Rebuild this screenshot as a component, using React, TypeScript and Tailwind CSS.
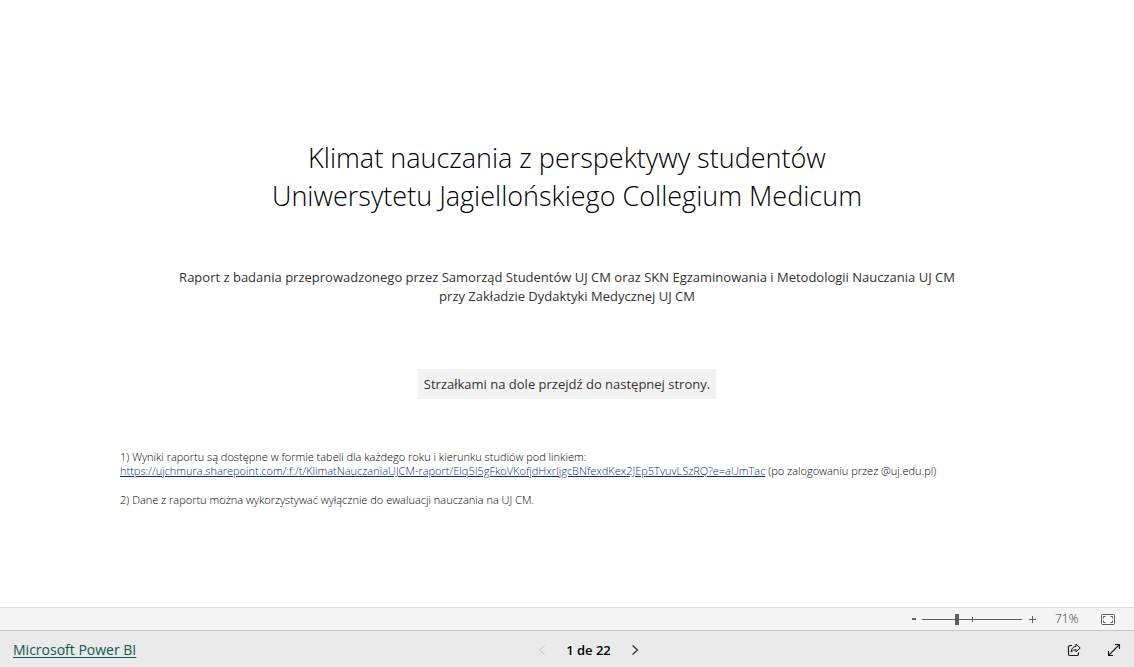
import { useState } from "react";

const REPORT_URL =
  "https://ujchmura.sharepoint.com/:f:/t/KlimatNauczaniaUJCM-raport/Elq5I5gFkoVKofjdHxrIjgcBNfexdKex2JEp5TvuvLSzRQ?e=aUmTac";

const TOTAL_PAGES = 22;

function ReportPage() {
  return (
    <main className="flex flex-1 flex-col items-center bg-white px-[120px] pt-[139px] text-[#323130]">
      <h1 className="text-center text-[27px] leading-[38px] font-light text-black">
        Klimat nauczania z perspektywy studentów
        <br />
        Uniwersytetu Jagiellońskiego Collegium Medicum
      </h1>

      <p className="mt-[53px] text-center text-[13px] leading-[19px]">
        Raport z badania przeprowadzonego przez Samorząd Studentów UJ CM oraz SKN Egzaminowania i Metodologii Nauczania UJ CM
        <br />
        przy Zakładzie Dydaktyki Medycznej UJ CM
      </p>

      <p className="mt-[63px] bg-[#f2f2f2] px-1.5 py-[5px] text-[13px] leading-5">
        Strzałkami na dole przejdź do następnej strony.
      </p>

      <div className="mt-[51px] self-stretch text-[11px] leading-[14px] font-light text-black">
        <p>1) Wyniki raportu są dostępne w formie tabeli dla każdego roku i kierunku studiów pod linkiem:</p>
        <p className="whitespace-nowrap">
          <a href={REPORT_URL} className="text-[#0f2a8a] underline">
            {REPORT_URL}
          </a>{" "}
          (po zalogowaniu przez @uj.edu.pl)
        </p>
        <p className="mt-[15px]">2) Dane z raportu można wykorzystywać wyłącznie do ewaluacji nauczania na UJ CM.</p>
      </div>
    </main>
  );
}

function ZoomBar() {
  const [zoom, setZoom] = useState(71);

  return (
    <div className="flex h-[23px] items-center justify-end border-t border-[#dcdcdc] bg-[#f4f4f4] pr-[19px] text-[#605e5c]">
      <button
        aria-label="Zoom out"
        onClick={() => setZoom(Math.max(10, zoom - 10))}
        className="flex h-4 w-4 items-center justify-center"
      >
        <span className="h-[2px] w-1 bg-current" />
      </button>
      <div className="relative flex items-center">
        <input
          type="range"
          aria-label="Zoom"
          min={10}
          max={190}
          value={zoom}
          onChange={(e) => setZoom(Number(e.target.value))}
          className="h-3 w-[100px] appearance-none bg-transparent [&::-webkit-slider-runnable-track]:h-px [&::-webkit-slider-runnable-track]:bg-[#605e5c] [&::-webkit-slider-thumb]:-mt-[5px] [&::-webkit-slider-thumb]:h-[11px] [&::-webkit-slider-thumb]:w-1 [&::-webkit-slider-thumb]:appearance-none [&::-webkit-slider-thumb]:bg-[#605e5c]"
        />
        <span className="pointer-events-none absolute left-1/2 h-[5px] w-px bg-[#605e5c]" />
      </div>
      <button
        aria-label="Zoom in"
        onClick={() => setZoom(Math.min(190, zoom + 10))}
        className="ml-[6px] flex h-4 w-[9px] items-center justify-center"
      >
        <svg width="9" height="9" viewBox="0 0 9 9" fill="none" stroke="currentColor">
          <path d="M1 4.5h7M4.5 1v7" />
        </svg>
      </button>
      <span className="ml-[18px] w-[26px] text-[12px] leading-4 font-light text-[#323130]">{zoom}%</span>
      <button aria-label="Fit to page" className="ml-5">
        <svg width="14" height="11" viewBox="0 0 14 11" fill="none" stroke="currentColor">
          <rect x="0.5" y="0.5" width="13" height="10" rx="1" />
          <path d="M2.5 4.5v-2h2M9.5 2.5h2v2M11.5 6.5v2h-2M4.5 8.5h-2v-2" />
        </svg>
      </button>
    </div>
  );
}

function StatusBar() {
  const [page, setPage] = useState(1);

  return (
    <footer className="grid h-[37px] grid-cols-3 items-center border-t border-[#c8c8c8] bg-[#eaeaea] px-[13px] pt-[2px]">
      <a
        href="https://powerbi.microsoft.com"
        className="justify-self-start text-[14px] leading-5 text-[#0b5a50] underline underline-offset-2"
      >
        Microsoft Power BI
      </a>

      <div className="flex items-center justify-self-center pl-[43px] text-black">
        <button
          aria-label="Previous page"
          disabled={page === 1}
          onClick={() => setPage(page - 1)}
          className="flex h-5 w-3 items-center justify-center disabled:text-[#bdbdbd]"
        >
          <svg width="8" height="12" viewBox="0 0 8 12" fill="none" stroke="currentColor">
            <path d="M6.5 1.5L1.5 6l5 4.5" />
          </svg>
        </button>
        <span className="mx-[18px] text-[13px] leading-5 font-semibold">
          {page} de {TOTAL_PAGES}
        </span>
        <button
          aria-label="Next page"
          disabled={page === TOTAL_PAGES}
          onClick={() => setPage(page + 1)}
          className="flex h-5 w-3 items-center justify-center text-[#333333]"
        >
          <svg width="8" height="12" viewBox="0 0 8 12" fill="none" stroke="currentColor" strokeWidth="1.3">
            <path d="M1.5 1.5L6.5 6l-5 4.5" />
          </svg>
        </button>
      </div>

      <div className="flex items-center gap-[26px] justify-self-end text-[#1a1a1a]">
        <button aria-label="Share">
          <svg width="14" height="14" viewBox="0 0 14 14" fill="none" stroke="currentColor" strokeLinejoin="round">
            <path d="M5 2.5H3Q1.5 2.5 1.5 4v7Q1.5 12.5 3 12.5h7q1.5 0 1.5-1.5V9.5" strokeWidth="1.2" />
            <path d="M9 1.2l4.2 3.8L9 8.8V6.7Q6 6.6 4.2 9 4.6 3.7 9 3.4z" />
          </svg>
        </button>
        <button aria-label="Full screen">
          <svg width="14" height="14" viewBox="0 0 14 14" fill="none" stroke="currentColor" strokeWidth="1.1">
            <path d="M1.5 12.5l11-11M8 1.5h4.5V6M1.5 8v4.5H6" />
          </svg>
        </button>
      </div>
    </footer>
  );
}

export default function App() {
  return (
    <div className="flex min-h-screen flex-col font-['Open_Sans','Noto_Sans',sans-serif]">
      <ReportPage />
      <ZoomBar />
      <StatusBar />
    </div>
  );
}
